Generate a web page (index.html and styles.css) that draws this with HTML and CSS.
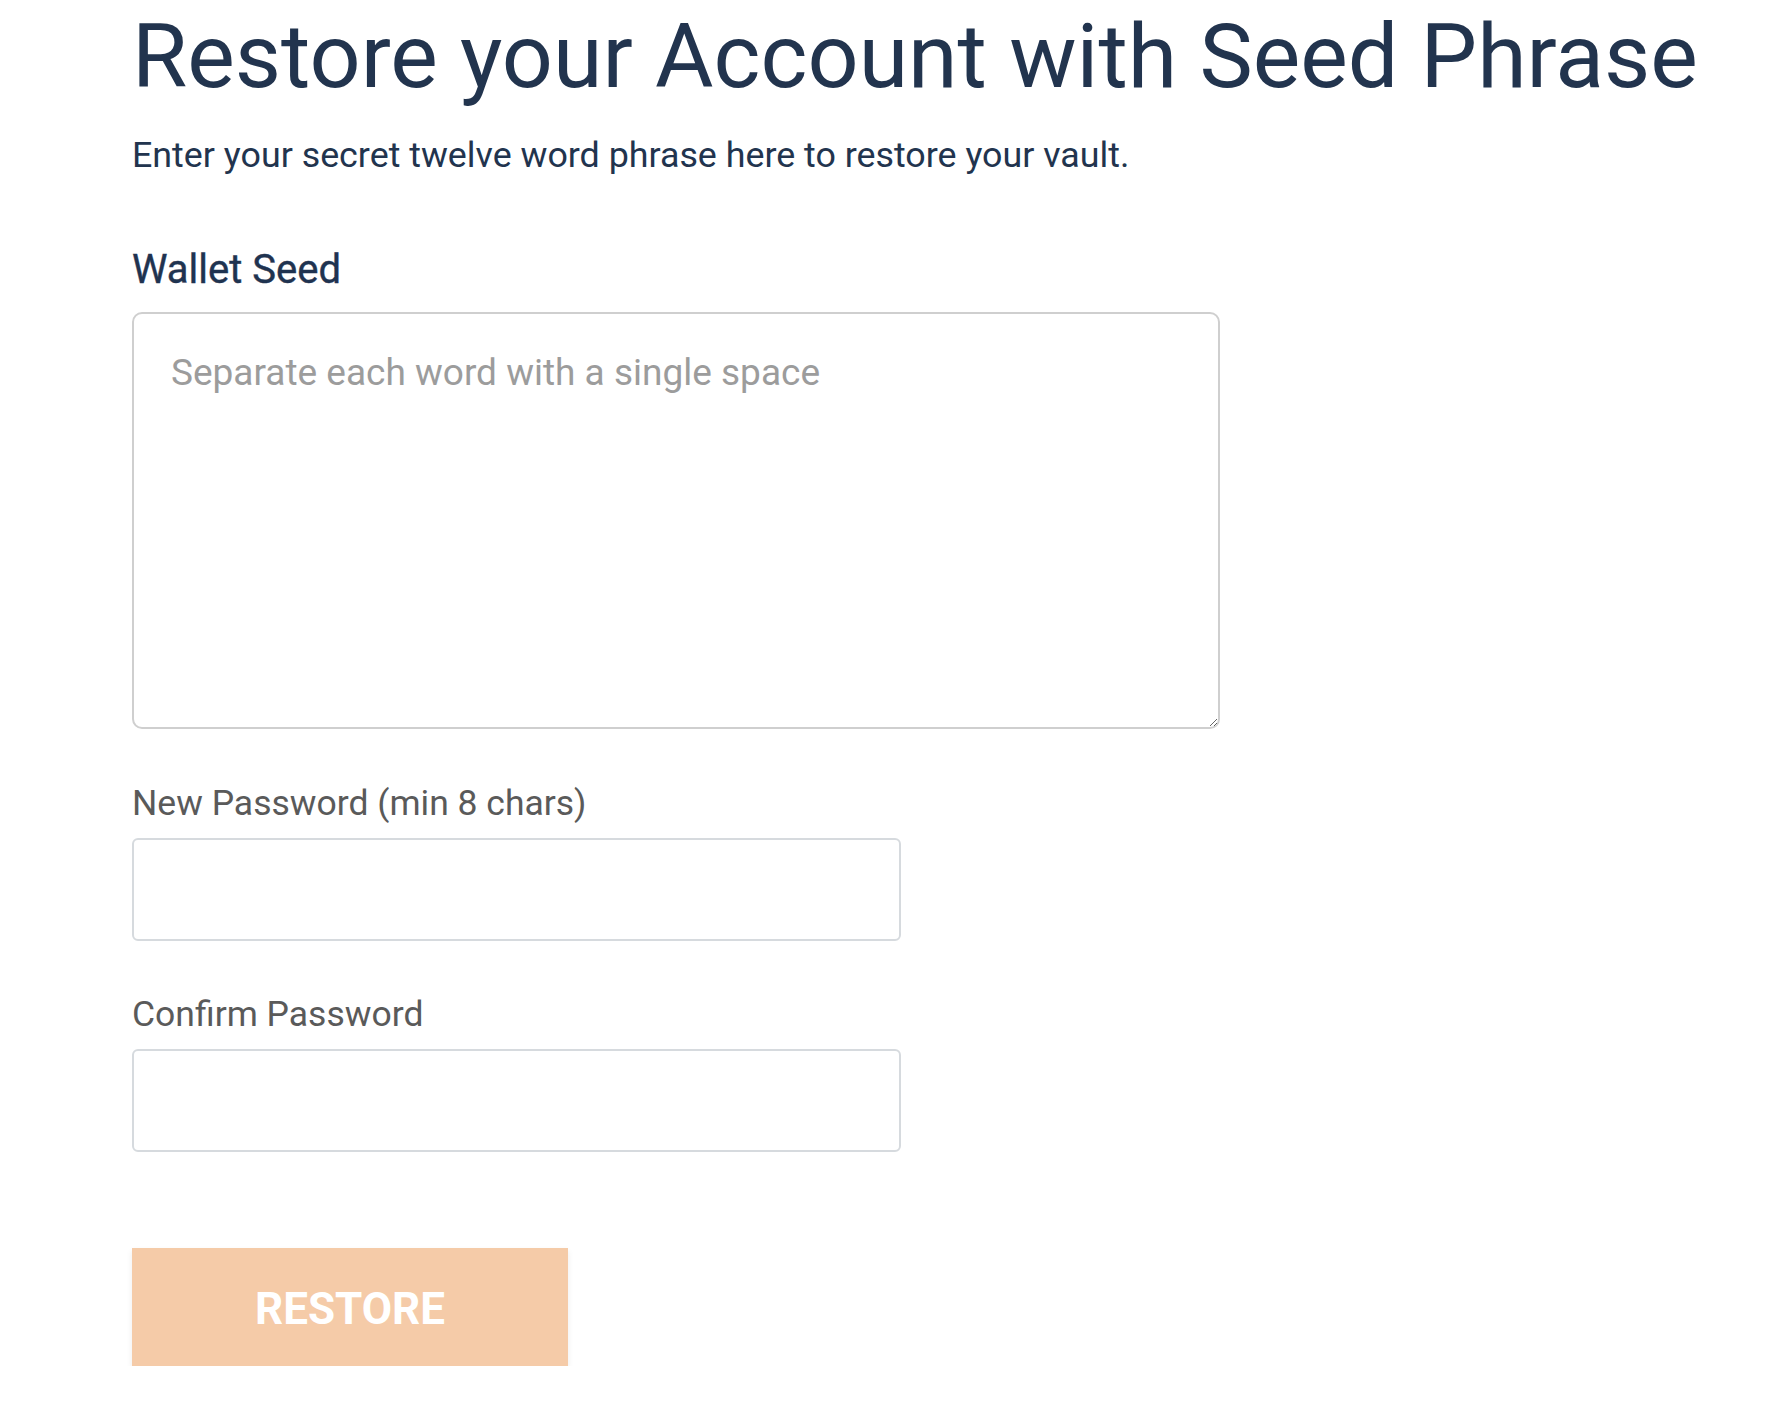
FILE: index.html
```html
<!DOCTYPE html>
<html lang="en">
<head>
<meta charset="utf-8">
<title>Restore your Account with Seed Phrase</title>
<link rel="stylesheet" href="styles.css">
</head>
<body>
<main class="page">
  <h1 class="title">Restore your Account with Seed Phrase</h1>
  <p class="subtitle">Enter your secret twelve word phrase here to restore your vault.</p>
  <form class="form">
    <label class="seed-label" for="seed">Wallet Seed</label>
    <textarea id="seed" class="seed" placeholder="Separate each word with a single space"></textarea>
    <label class="field-label first" for="pw">New Password (min 8 chars)</label>
    <input id="pw" class="field" type="password">
    <label class="field-label" for="pw2">Confirm Password</label>
    <input id="pw2" class="field" type="password">
    <button type="button" class="restore">RESTORE</button>
  </form>
</main>
</body>
</html>
```

FILE: styles.css
```css
html, body {
  margin: 0;
  padding: 0;
  background: #ffffff;
}

body {
  font-family: Roboto, "Liberation Sans", sans-serif;
}

.page {
  padding: 5px 0 0 132px;
}

.title {
  margin: 0;
  font-size: 89.7px;
  line-height: 104px;
  font-weight: 400;
  color: #22344e;
  white-space: nowrap;
}

.subtitle {
  margin: 25px 0 0;
  font-size: 35.8px;
  line-height: 42px;
  font-weight: 400;
  color: #22344e;
}

.form {
  display: flex;
  flex-direction: column;
  align-items: flex-start;
}

.seed-label {
  margin-top: 70px;
  font-size: 40px;
  line-height: 48px;
  font-weight: 400;
  color: #1f3350;
  -webkit-text-stroke: 0.4px #1f3350;
}

.seed {
  box-sizing: border-box;
  margin-top: 18px;
  width: 1088px;
  height: 417px;
  padding: 37px 37px;
  border: 2px solid #cfcfcf;
  border-radius: 10px;
  font-family: Roboto, "Liberation Sans", sans-serif;
  font-size: 37px;
  line-height: 44px;
  color: #333;
  outline: none;
}

.seed::placeholder {
  color: #9c9c9c;
}

.field-label {
  margin-top: 52px;
  font-size: 35.5px;
  line-height: 42px;
  font-weight: 400;
  color: #5a5a5a;
}

.field-label.first {
  margin-top: 53px;
}

.field {
  box-sizing: border-box;
  margin-top: 14px;
  width: 769px;
  height: 103px;
  padding: 0 20px;
  border: 2px solid #d6dade;
  border-radius: 6px;
  font-size: 32px;
  outline: none;
}

.restore {
  margin-top: 96px;
  width: 436px;
  height: 118px;
  padding: 4px 0 0;
  border: none;
  border-radius: 0;
  background: #f5cba8;
  color: #ffffff;
  font-family: Roboto, "Liberation Sans", sans-serif;
  font-size: 44px;
  font-weight: 700;
  box-shadow: 0 3px 6px rgba(0, 0, 0, 0.08);
  cursor: pointer;
}
```
